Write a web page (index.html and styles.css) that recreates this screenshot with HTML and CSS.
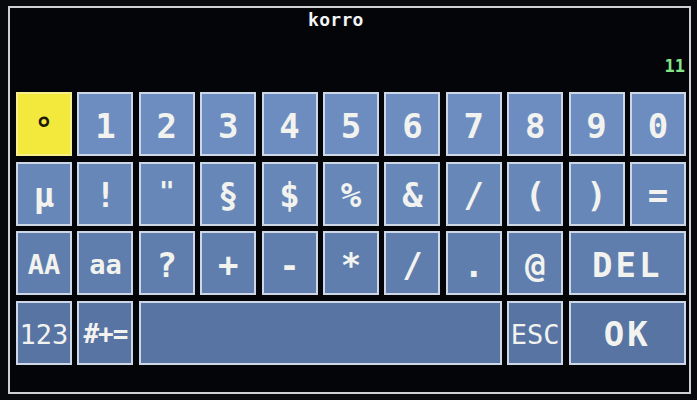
FILE: index.html
```html
<!DOCTYPE html>
<html>
<head>
<meta charset="utf-8">
<link rel="stylesheet" href="styles.css">
</head>
<body>
<div class="screen">
  <div class="title">korro</div>
  <div class="count">11</div>
  <div class="keys">
    <div class="key sel">°</div>
    <div class="key r1">1</div>
    <div class="key r1">2</div>
    <div class="key r1">3</div>
    <div class="key r1">4</div>
    <div class="key r1">5</div>
    <div class="key r1">6</div>
    <div class="key r1">7</div>
    <div class="key r1">8</div>
    <div class="key r1">9</div>
    <div class="key r1">0</div>

    <div class="key r2">μ</div>
    <div class="key r2">!</div>
    <div class="key r2 quote">"</div>
    <div class="key r2">§</div>
    <div class="key r2">$</div>
    <div class="key r2">%</div>
    <div class="key r2">&amp;</div>
    <div class="key r2">/</div>
    <div class="key r2">(</div>
    <div class="key r2">)</div>
    <div class="key r2">=</div>

    <div class="key r3 small">AA</div>
    <div class="key r3 small">aa</div>
    <div class="key r3">?</div>
    <div class="key r3">+</div>
    <div class="key r3">-</div>
    <div class="key r3">*</div>
    <div class="key r3">/</div>
    <div class="key r3">.</div>
    <div class="key r3">@</div>
    <div class="key r3 wide big">DEL</div>

    <div class="key r4 thin">123</div>
    <div class="key r4 sym">#+=</div>
    <div class="key r4 space"></div>
    <div class="key r4 thin">ESC</div>
    <div class="key r4 wide big">OK</div>
  </div>
</div>
</body>
</html>
```

FILE: styles.css
```css
html, body {
  margin: 0;
  padding: 0;
  background: #07090d;
}
body {
  width: 697px;
  height: 400px;
  padding: 6px 0 0 8px;
  box-sizing: border-box;
  font-family: "DejaVu Sans Mono", "Liberation Mono", monospace;
}
.screen {
  width: 683px;
  height: 388px;
  box-sizing: border-box;
  border: 2px solid #cfd0d2;
  background: #030509;
  padding: 0 3px 0 6px;
  display: flex;
  flex-direction: column;
}
.title {
  margin-top: 1px;
  padding-left: 292px;
  color: #f4f4f4;
  font-weight: bold;
  font-size: 18px;
  line-height: 22px;
  letter-spacing: 0.3px;
}
.count {
  margin-top: 25px;
  align-self: flex-end;
  padding-right: 1px;
  color: #86e58a;
  font-weight: bold;
  font-size: 17px;
  line-height: 20px;
}
.keys {
  margin-top: 16px;
  width: 670px;
  display: grid;
  grid-template-columns: repeat(11, 1fr);
  grid-template-rows: repeat(4, 64px);
  column-gap: 5.4px;
  row-gap: 5.6px;
}
.key {
  box-sizing: border-box;
  border: 2px solid #cdd7e6;
  display: flex;
  align-items: center;
  justify-content: center;
  color: #f2f3ef;
  font-weight: bold;
  font-size: 34px;
  line-height: 1;
  padding-top: 3px;
  overflow: hidden;
}
.r1 { background: #6d8dc0; }
.r2 { background: #6787b9; }
.r3 { background: #5f7dad; }
.r4 { background: #5874a3; }
.sel {
  background: #f3e83c;
  border-color: #f6ef8c;
  color: #1b1a08;
  font-size: 32px;
  padding-top: 10px;
}
.quote { font-size: 26px; padding-bottom: 6px; }
.small { font-size: 27px; }
.thin { font-weight: normal; font-size: 27px; }
.sym { font-size: 26px; letter-spacing: -1px; }
.big { font-size: 34px; letter-spacing: 3px; }
.wide { grid-column: span 2; }
.space { grid-column: span 6; }
```
